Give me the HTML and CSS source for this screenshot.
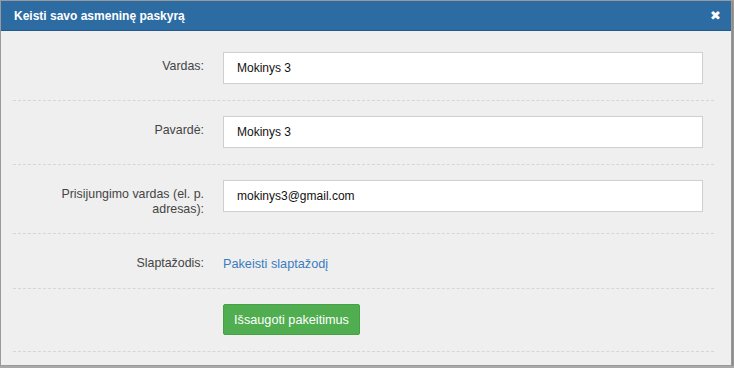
FILE: index.html
```html
<!DOCTYPE html>
<html lang="lt">
<head>
    <meta charset="UTF-8">
    <title>Keisti savo asmeninę paskyrą</title>
    <link rel="stylesheet" href="styles.css">
</head>
<body>
<div class="dialog">
    <div class="dialogHead">
        <span class="dialogTitle">Keisti savo asmeninę paskyrą</span>
        <span class="dialogClose">&#10006;</span>
    </div>
    <div class="dialogBody">
        <div class="formRow">
            <label class="rowLabel">Vardas:</label>
            <div class="rowField"><input class="textInput" type="text" value="Mokinys 3"></div>
        </div>
        <div class="formRow">
            <label class="rowLabel">Pavardė:</label>
            <div class="rowField"><input class="textInput" type="text" value="Mokinys 3"></div>
        </div>
        <div class="formRow">
            <label class="rowLabel">Prisijungimo vardas (el. p. adresas):</label>
            <div class="rowField"><input class="textInput" type="text" value="mokinys3@gmail.com"></div>
        </div>
        <div class="formRow">
            <label class="rowLabel">Slaptažodis:</label>
            <div class="rowField rowStatic"><a class="rowLink" href="#">Pakeisti slaptažodį</a></div>
        </div>
        <div class="formRow">
            <div class="rowLabel"></div>
            <div class="rowField"><button class="saveBtn" type="button">Išsaugoti pakeitimus</button></div>
        </div>
    </div>
</div>
</body>
</html>
```
FILE: styles.css
```css
*{
    margin: 0;
    padding: 0;
    box-sizing: border-box;
}
body{
    background: #a8a8a8;
    font-family: "Liberation Sans", Arial, sans-serif;
    font-size: 13px;
    color: #333;
}
.dialog{
    width: 732px;
    height: 366px;
    background: #efefef;
    border: 1px solid #9a9a9a;
    box-shadow: 1px 1px 2px rgba(0,0,0,0.25);
}
.dialogHead{
    height: 30px;
    background: #2c6ca3;
    border-bottom: 1px solid #23598a;
    display: flex;
    align-items: center;
    justify-content: space-between;
    padding: 0 10px 0 13px;
    color: #fff;
}
.dialogTitle{
    font-weight: bold;
    font-size: 12px;
}
.dialogClose{
    font-size: 13px;
    font-weight: bold;
    font-family: "DejaVu Sans", sans-serif;
}
.dialogBody{
    padding: 6px 17px 0 12px;
}
.formRow{
    display: flex;
    gap: 19px;
    padding: 15px 0 16px;
    border-bottom: 1px dashed #d6d6d6;
}
.rowLabel{
    width: 191px;
    flex-shrink: 0;
    text-align: right;
    padding-top: 7px;
    line-height: 15px;
    font-size: 12.4px;
    color: #444;
}
.rowField{
    flex: 1;
    padding-right: 11px;
}
.rowStatic{
    padding-top: 7px;
    line-height: 15px;
}
.textInput{
    width: 100%;
    height: 32px;
    border: 1px solid #cfcfcf;
    background: #fff;
    padding: 0 13px;
    font-family: "Liberation Sans", Arial, sans-serif;
    font-size: 12px;
    color: #111;
    outline: none;
}
.rowLink{
    color: #3a7dbf;
    font-size: 12.7px;
    text-decoration: none;
}
.saveBtn{
    height: 31px;
    width: 137px;
    background: #50ad50;
    border: 1px solid #46a046;
    border-radius: 2px;
    color: #fff;
    font-family: "Liberation Sans", Arial, sans-serif;
    font-size: 12.7px;
    cursor: pointer;
}
```
